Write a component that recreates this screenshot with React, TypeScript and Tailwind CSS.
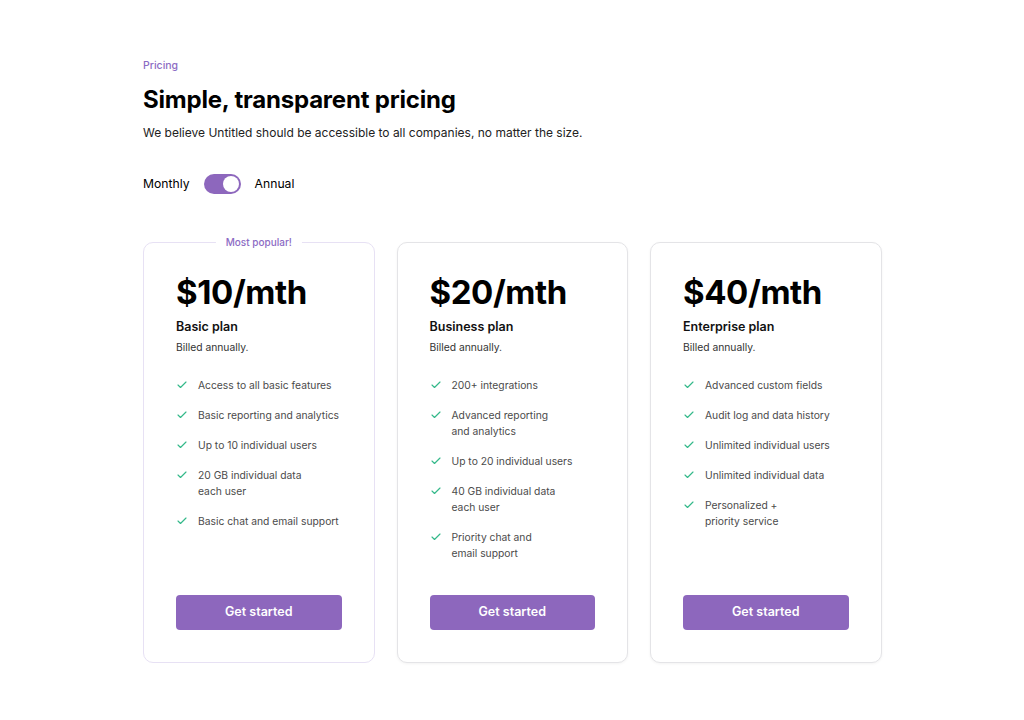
import { Check } from "lucide-react";

interface Plan {
  price: string;
  name: string;
  features: string[][];
  popular?: boolean;
}

const plans: Plan[] = [
  {
    price: "$10/mth",
    name: "Basic plan",
    popular: true,
    features: [
      ["Access to all basic features"],
      ["Basic reporting and analytics"],
      ["Up to 10 individual users"],
      ["20 GB individual data", "each user"],
      ["Basic chat and email support"],
    ],
  },
  {
    price: "$20/mth",
    name: "Business plan",
    features: [
      ["200+ integrations"],
      ["Advanced reporting", "and analytics"],
      ["Up to 20 individual users"],
      ["40 GB individual data", "each user"],
      ["Priority chat and", "email support"],
    ],
  },
  {
    price: "$40/mth",
    name: "Enterprise plan",
    features: [
      ["Advanced custom fields"],
      ["Audit log and data history"],
      ["Unlimited individual users"],
      ["Unlimited individual data"],
      ["Personalized +", "priority service"],
    ],
  },
];

function PlanCard({ plan }: { plan: Plan }) {
  const border = plan.popular
    ? "border-[#e7e1f4]"
    : "border-[#e4e4e7] shadow-[0_1px_3px_rgba(0,0,0,0.05)]";
  return (
    <div className={`relative flex flex-col w-[231.5px] h-[421px] rounded-[10px] border bg-white px-[32px] pt-[30px] pb-[32px] ${border}`}>
      {plan.popular && (
        <span className="absolute -top-[8px] left-1/2 -translate-x-1/2 bg-white px-[10px] text-[10px] leading-[14px] font-medium text-[#8c6bc4]">
          Most popular!
        </span>
      )}
      <div className="text-[33px] leading-[38px] font-bold tracking-[-0.4px] text-black">{plan.price}</div>
      <div className="mt-[7px] text-[12.5px] leading-[18px] font-semibold text-[#111]">{plan.name}</div>
      <div className="mt-[4px] text-[10.3px] leading-[14px] text-[#333]">Billed annually.</div>
      <ul className="mt-[23px] flex flex-col gap-[14px]">
        {plan.features.map((lines) => (
          <li key={lines[0]} className="flex items-start gap-[10px]">
            <Check className="mt-[2px] w-[12px] h-[12px] text-[#34b98a] shrink-0" strokeWidth={2.3} />
            <span className="text-[10.3px] leading-[16px] text-[#4b4b4b] whitespace-nowrap">
              {lines.map((l) => (
                <span key={l} className="block">{l}</span>
              ))}
            </span>
          </li>
        ))}
      </ul>
      <button className="mt-auto h-[35px] w-full rounded-[4px] bg-[#8d67bd] text-[12.5px] font-semibold text-white">
        Get started
      </button>
    </div>
  );
}

export default function App() {
  return (
    <div className="min-h-[720px] bg-white pl-[143px] pt-[58px] font-['Inter','Liberation_Sans',sans-serif] text-black">
      <div className="text-[10.5px] leading-[15px] font-medium text-[#8c6bc4]">Pricing</div>
      <h1 className="mt-[12px] text-[24px] leading-[30px] font-bold tracking-[-0.2px]">Simple, transparent pricing</h1>
      <p className="mt-[9px] text-[12px] leading-[18px] text-[#222]">
        We believe Untitled should be accessible to all companies, no matter the size.
      </p>
      <div className="mt-[32px] flex items-center gap-[14px] text-[12.2px]">
        <span>Monthly</span>
        <div className="flex items-center justify-end w-[37px] h-[20px] rounded-full bg-[#8d67bd] p-[2px]">
          <div className="w-[16px] h-[16px] rounded-full bg-white" />
        </div>
        <span>Annual</span>
      </div>
      <div className="mt-[48px] flex gap-[22px]">
        {plans.map((p) => (
          <PlanCard key={p.name} plan={p} />
        ))}
      </div>
    </div>
  );
}
